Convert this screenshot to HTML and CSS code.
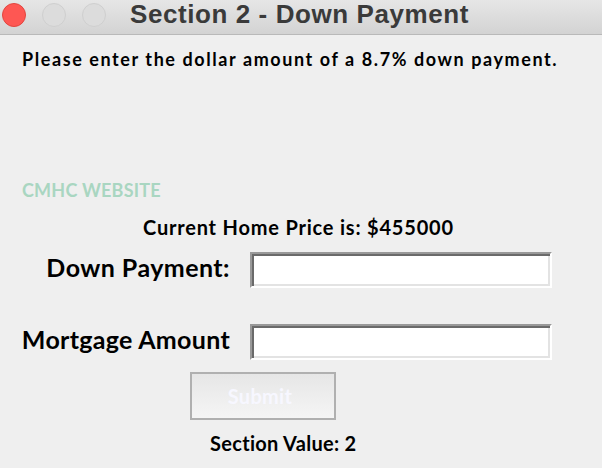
FILE: index.html
```html
<!DOCTYPE html>
<html>
<head>
<meta charset="utf-8">
<link rel="stylesheet" href="styles.css">
</head>
<body>
<div class="window">
  <div class="titlebar">
    <div class="lights">
      <span class="light red"></span>
      <span class="light"></span>
      <span class="light"></span>
    </div>
    <div class="title">Section 2 - Down Payment</div>
  </div>
  <div class="content">
    <p class="prompt">Please enter the dollar amount of a 8.7% down payment.</p>
    <a class="link">CMHC WEBSITE</a>
    <p class="price">Current Home Price is: $455000</p>
    <div class="form">
      <label class="label label-down">Down Payment:</label>
      <div class="field"></div>
      <label class="label">Mortgage Amount</label>
      <div class="field"></div>
    </div>
    <button class="submit">Submit</button>
    <p class="value">Section Value: 2</p>
  </div>
</div>
</body>
</html>
```
FILE: styles.css
```css
* { box-sizing: border-box; }
html, body { margin: 0; padding: 0; }
body {
  width: 602px;
  height: 468px;
  overflow: hidden;
  background: #efefef;
  font-family: "Lato", "DejaVu Sans", sans-serif;
  font-weight: 700;
  color: #000;
}
.window { display: flex; flex-direction: column; height: 100%; }
.titlebar {
  height: 35px;
  flex: none;
  display: flex;
  align-items: center;
  background: linear-gradient(#e6e6e6, #d3d3d3);
  border-bottom: 1px solid #b9b9b9;
}
.lights { display: flex; gap: 16px; padding-left: 2px; margin-top: -5px; }
.light {
  width: 24px; height: 24px; border-radius: 50%;
  background: #dcdcdc;
  border: 1px solid #cfcfcf;
}
.light.red { background: #fe5753; border-color: #e2463f; }
.title {
  margin-left: 24px;
  margin-top: -6px;
  font-family: "Liberation Sans", Arial, sans-serif;
  font-weight: 700;
  font-size: 26px;
  color: #3a3a3a;
  letter-spacing: 0.58px;
}
.content { display: flex; flex-direction: column; }
.prompt {
  margin: 13px 0 0 22px;
  font-size: 18px;
  line-height: 22px;
  letter-spacing: 1.58px;
}
.link {
  align-self: flex-start;
  margin: 109px 0 0 22px;
  font-size: 18px;
  line-height: 22px;
  letter-spacing: 0.2px;
  color: #a9d6c1;
}
.price {
  margin: 14px 0 0 143px;
  font-size: 20px;
  line-height: 24px;
  letter-spacing: 0.8px;
}
.form {
  display: grid;
  grid-template-columns: 250px 302px;
  grid-template-rows: 36px 36px;
  row-gap: 36px;
  margin-top: 13px;
}
.label {
  justify-self: end;
  align-self: start;
  padding-right: 20px;
  font-size: 25px;
  line-height: 30px;
  letter-spacing: 0.3px;
}
.label-down { letter-spacing: 0.45px; }
.field {
  height: 36px;
  background: #fff;
  border-top: 2px solid #999;
  border-left: 2px solid #999;
  border-right: 2px solid #fff;
  border-bottom: 2px solid #fff;
  box-shadow: inset 2px 2px 0 #6a6a6a, inset -2px -2px 0 #e3e3e3;
}
.submit {
  margin: 12px 0 0 190px;
  width: 146px;
  height: 48px;
  border: 2px solid #b0b0b0;
  background: linear-gradient(#e6e6e6, #f5f5f5);
  color: #f7f7ff;
  font-family: inherit;
  font-weight: 700;
  font-size: 20px;
  letter-spacing: 0.3px;
  padding: 0 6px 0 0;
}
.value {
  margin: 11px 0 0 210px;
  font-size: 20px;
  line-height: 24px;
  letter-spacing: 0.3px;
}
```
